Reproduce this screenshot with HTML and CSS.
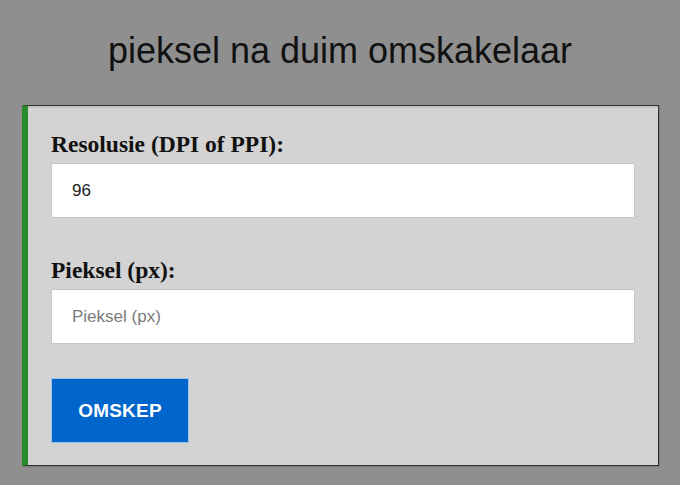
FILE: index.html
```html
<!DOCTYPE html>
<html lang="af">
<head>
<meta charset="utf-8">
<title>pieksel na duim omskakelaar</title>
<link rel="stylesheet" href="styles.css">
</head>
<body>
<h1 class="title">pieksel na duim omskakelaar</h1>
<form class="card">
  <div class="field">
    <label class="label" for="dpi">Resolusie (DPI of PPI):</label>
    <input class="input" id="dpi" type="text" value="96">
  </div>
  <div class="field field-next">
    <label class="label" for="px">Pieksel (px):</label>
    <input class="input" id="px" type="text" placeholder="Pieksel (px)">
  </div>
  <button class="button" type="button">OMSKEP</button>
</form>
</body>
</html>
```
FILE: styles.css
```css
html, body {
  margin: 0;
  padding: 0;
}
body {
  background: #8f8f8f;
  font-family: "Liberation Sans", Arial, sans-serif;
  height: 485px;
  overflow: hidden;
}
.title {
  margin: 0 0 33px 0;
  padding-top: 30px;
  font-size: 36px;
  line-height: 42px;
  font-weight: normal;
  color: #111;
  text-align: center;
}
.card {
  display: flex;
  flex-direction: column;
  align-items: flex-start;
  margin: 0 21px 0 22px;
  padding: 25px 23px 22px 23px;
  background: #d3d3d3;
  border: 1px solid #2e2e2e;
  border-left: 6px solid #2a8b2e;
  box-shadow: inset 0 2px 0 #c4c4c4, 1px 1px 0 #7d7d7d;
}
.field {
  display: flex;
  flex-direction: column;
  align-self: stretch;
  gap: 6px;
}
.field-next {
  margin-top: 39px;
}
.label {
  font-family: "Liberation Serif", "Times New Roman", serif;
  font-weight: bold;
  font-size: 23.5px;
  line-height: 26px;
  color: #111;
}
.input {
  box-sizing: border-box;
  height: 55px;
  padding: 0 20px;
  border: 1px solid #c6c6c6;
  border-radius: 2px;
  background: #fff;
  font-family: "Liberation Sans", Arial, sans-serif;
  font-size: 17px;
  color: #222;
  outline: none;
}
.input::placeholder {
  color: #7a7a7a;
}
.button {
  margin-top: 34px;
  width: 138px;
  height: 65px;
  border: 1px solid #9fc4ea;
  background: #0066cc;
  color: #fff;
  font-family: "Liberation Sans", Arial, sans-serif;
  font-weight: bold;
  font-size: 19px;
  letter-spacing: 0.2px;
  cursor: pointer;
}
```
